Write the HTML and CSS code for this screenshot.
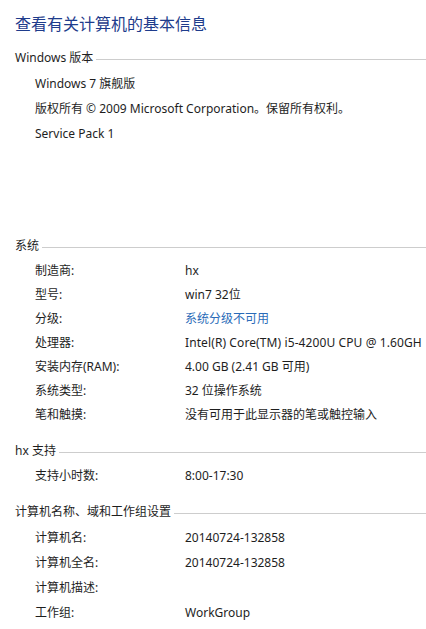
FILE: index.html
```html
<!DOCTYPE html>
<html lang="zh-CN">
<head>
	<meta charset="utf-8">
	<title>查看有关计算机的基本信息</title>
	<link rel="stylesheet" href="styles.css">
</head>
<body>
	<div class="page">
		<h1 class="title">查看有关计算机的基本信息</h1>

		<div class="section">
			<h2 class="heading"><span>Windows 版本</span></h2>
			<ul class="plain">
				<li>Windows 7 旗舰版</li>
				<li>版权所有 © 2009 Microsoft Corporation。保留所有权利。</li>
				<li>Service Pack 1</li>
			</ul>
		</div>

		<div class="section sys">
			<h2 class="heading"><span>系统</span></h2>
			<ul class="props tight">
				<li><label>制造商:</label><span>hx</span></li>
				<li><label>型号:</label><span>win7 32位</span></li>
				<li><label>分级:</label><a href="#">系统分级不可用</a></li>
				<li><label>处理器:</label><span class="clip">Intel(R) Core(TM) i5-4200U CPU @ 1.60GH</span></li>
				<li><label>安装内存(RAM):</label><span>4.00 GB (2.41 GB 可用)</span></li>
				<li><label>系统类型:</label><span>32 位操作系统</span></li>
				<li><label>笔和触摸:</label><span>没有可用于此显示器的笔或触控输入</span></li>
			</ul>
		</div>

		<div class="section support">
			<h2 class="heading"><span>hx 支持</span></h2>
			<ul class="props tight">
				<li><label>支持小时数:</label><span>8:00-17:30</span></li>
			</ul>
		</div>

		<div class="section support">
			<h2 class="heading"><span>计算机名称、域和工作组设置</span></h2>
			<ul class="props">
				<li><label>计算机名:</label><span>20140724-132858</span></li>
				<li><label>计算机全名:</label><span>20140724-132858</span></li>
				<li><label>计算机描述:</label><span></span></li>
				<li><label>工作组:</label><span>WorkGroup</span></li>
			</ul>
		</div>
	</div>
</body>
</html>
```

FILE: styles.css
```css
html *{
	margin: 0;
	padding: 0;
}
body{
	font-family: "Noto Sans", "Noto Sans CJK SC", sans-serif;
	font-size: 12px;
	color: #1e1e1e;
	background: #fff;
	overflow: hidden;
}
.page{
	padding-left: 15px;
	white-space: nowrap;
}
.title{
	font-size: 16px;
	font-weight: normal;
	color: #1e3c8c;
	height: 47px;
	line-height: 48px;
}
.heading{
	display: flex;
	align-items: center;
	height: 20px;
	font-size: 12px;
	font-weight: normal;
}
.heading:after{
	content: '';
	flex: 1;
	height: 1px;
	margin: 4px 0 0 3px;
	background: #cdcdcd;
}
ul{
	list-style: none;
	padding-left: 20px;
	margin-top: 4px;
}
li{
	height: 25px;
	line-height: 25px;
	display: flex;
}
.tight{
	margin-top: 4px;
}
.tight li{
	height: 24px;
	line-height: 24px;
}
.props li label{
	width: 150px;
	flex-shrink: 0;
}
.props a{
	color: #2a6bb8;
	text-decoration: none;
}
.clip{
	letter-spacing: 0.1px;
}
.sys{
	margin-top: 89px;
}
.support{
	margin-top: 13px;
}
```
